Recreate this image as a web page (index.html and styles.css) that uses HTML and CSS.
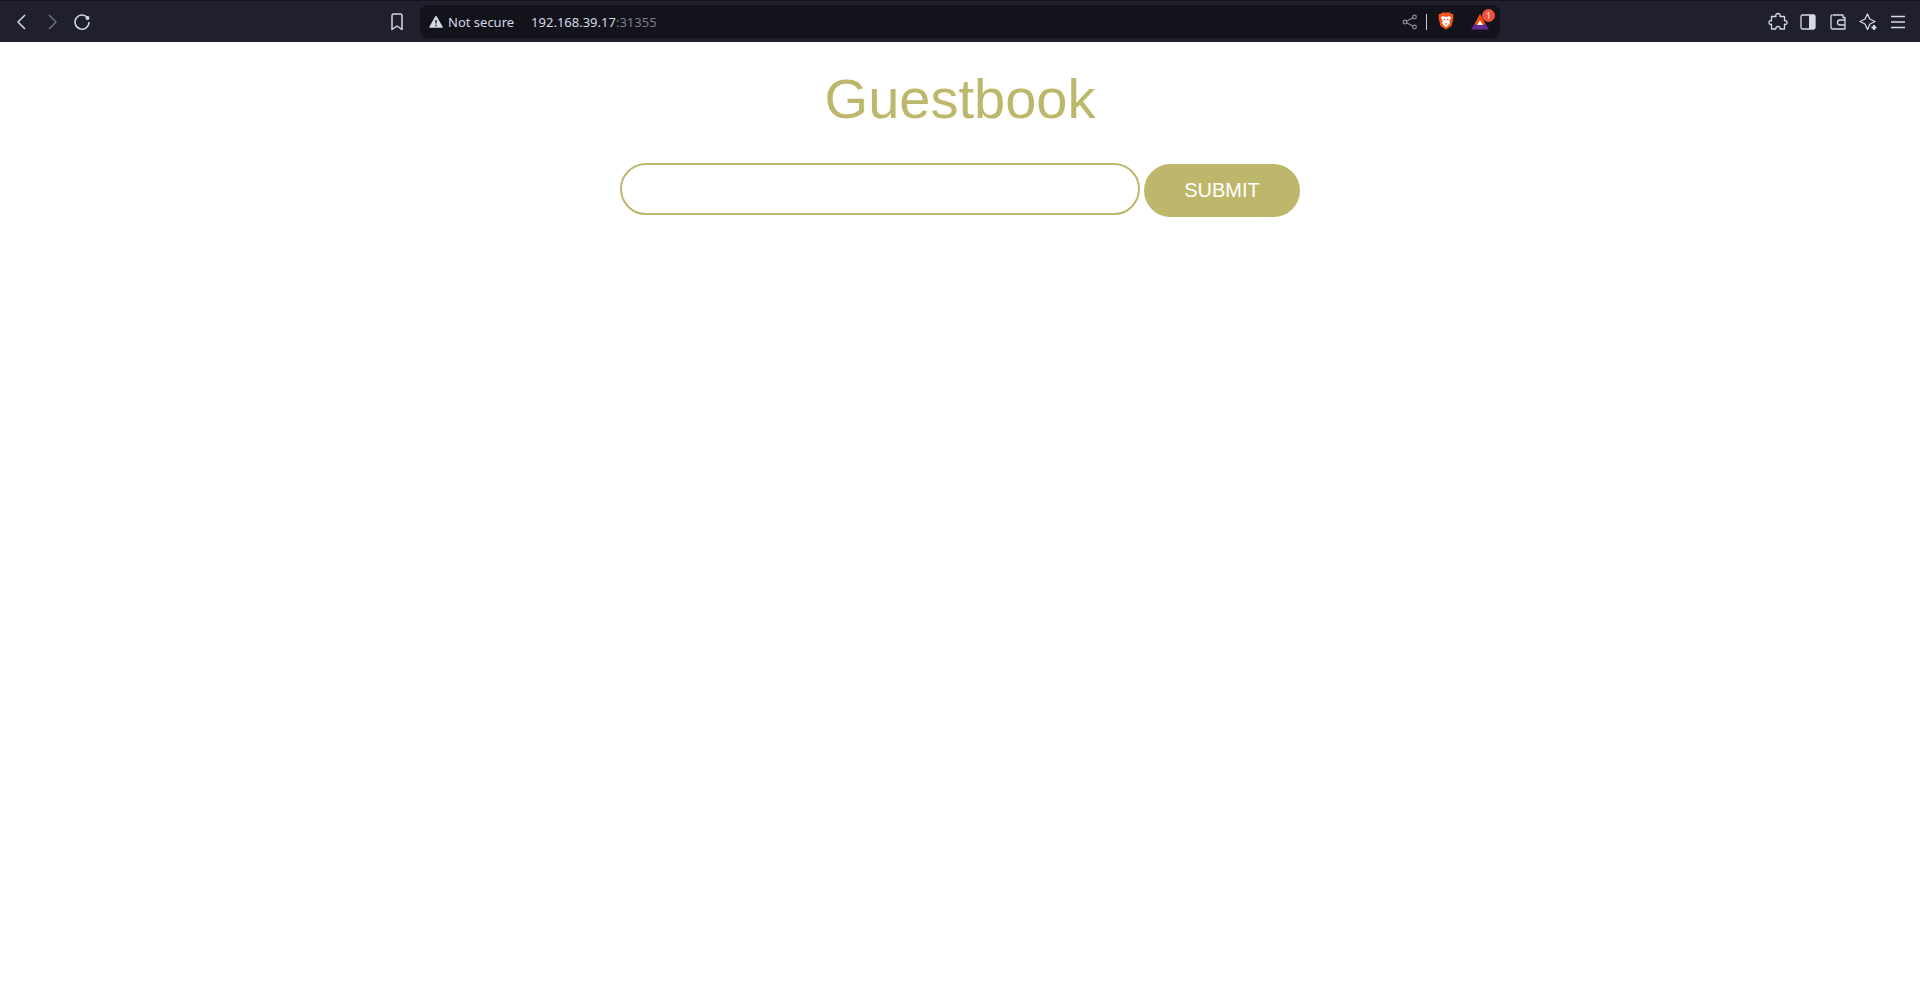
FILE: index.html
```html
<!DOCTYPE html>
<html lang="en">
    <head>
        <meta charset="UTF-8">
        <title>Guestbook</title>
        <link rel="stylesheet" href="styles.css">
    </head>

    <body>
        <header class="toolbar">
            <div class="nav-group">
                <svg class="icon" width="24" height="24" viewBox="0 0 24 24"><path d="M15 5l-7 7 7 7" class="line-bright"/></svg>
                <svg class="icon" width="24" height="24" viewBox="0 0 24 24"><path d="M9 5l7 7-7 7" class="line-dim"/></svg>
                <svg class="icon" width="24" height="24" viewBox="0 0 24 24"><path d="M18 8.500A7 7 0 1 0 19 12" class="line-bright"/><circle cx="17.500" cy="8" r="2" fill="#d5d8e6"/></svg>
            </div>
            <svg class="icon bookmark" width="24" height="24" viewBox="0 0 24 24"><path d="M7 5.500a1.500 1.500 0 0 1 1.500-1.500h7a1.500 1.500 0 0 1 1.500 1.500V19.500l-5-3.500-5 3.500z" class="line-bright"/></svg>
            <div class="address-bar">
                <svg class="warn" width="16" height="16" viewBox="0 0 16 16"><path d="M8 2.500l6 10.500h-12z" fill="#d5d8e6" stroke="#d5d8e6" stroke-width="1.500" stroke-linejoin="round"/><path d="M8 6v3.500M8 10.800v1.400" stroke="#15151f" stroke-width="1.400"/></svg>
                <span class="secure-text">Not secure</span>
                <span class="url">192.168.39.17<span class="port">:31355</span></span>
                <div class="bar-right">
                    <svg width="16" height="16" viewBox="0 0 16 16"><path d="M11 3.800l-6.500 3.400 0 1.600 6.500 3.400" class="line-grey"/><circle cx="12.500" cy="3" r="1.800" class="line-grey"/><circle cx="3" cy="8" r="1.800" class="line-grey"/><circle cx="12.500" cy="13" r="1.800" class="line-grey"/></svg>
                    <span class="divider"></span>
                    <svg class="lion" width="16" height="19" viewBox="0 0 16 19"><path d="M4 0.500h8l1.500 1.500 2 0-0.500 2 0.500 2-2 8-5.500 3.500-5.500-3.500-2-8 0.500-2-0.500-2 2 0z" fill="#f1561f"/><path d="M2.800 5.500l2.200-1.500 1.500 .8h3l1.500-.8 2.200 1.500-2 3.500 .8 2-3 3.500-.5 .5h-1l-.5-.5-3-3.500 .8-2z" fill="#fff"/><path d="M5.500 7.500h1.500M9 7.500h1.500M7 12h2" stroke="#f1561f" stroke-width="1.200"/></svg>
                    <div class="rewards">
                        <svg width="18" height="16" viewBox="0 0 18 16"><path d="M9 0l9 15.500h-18z" fill="#662d91"/><path d="M9 0l5.500 10.500h-11z" fill="#ff5000"/><path d="M9 6l2.800 5h-5.600z" fill="#fff"/></svg>
                        <span class="badge">1</span>
                    </div>
                </div>
            </div>
            <div class="tool-group">
                <svg class="icon" width="24" height="24" viewBox="0 0 24 24"><path d="M10 6.500c-.8-2 .8-3 2-3s2.800 1 2 3h4.500v4.300c2-.8 2.500 .7 2.500 1.700s-.5 2.500-2.500 1.700v4.800h-4.500c.6-1.800-1-2.500-2-2.500s-2.600 .7-2 2.500H5.500v-4.800c-2 .8-2.500-.7-2.500-1.700s.5-2.500 2.500-1.700V6.500z" class="line-thin"/></svg>
                <svg class="icon" width="24" height="24" viewBox="0 0 24 24"><rect x="5" y="5" width="14" height="14" rx="1.500" class="line-thin"/><rect x="13" y="5" width="6" height="14" fill="#d5d8e6"/></svg>
                <svg class="icon" width="24" height="24" viewBox="0 0 24 24"><path d="M7 5h10v2.500H19V19H6.500A1.500 1.500 0 0 1 5 17.500V6.500A1.500 1.500 0 0 1 6.500 5" class="line-thin"/><path d="M19 10h-5a2.500 2.500 0 0 0 0 5h5" class="line-thin"/></svg>
                <svg class="icon" width="24" height="24" viewBox="0 0 24 24"><path d="M11.500 4l2.300 5 5.200 2.500-5 2.500-2.500 5.500-2.500-5.500-5-2.500 5-2.500z" class="line-thin"/><path d="M18 15v5M15.500 17.500h5" stroke="#d5d8e6" stroke-width="2"/></svg>
                <svg class="icon" width="24" height="24" viewBox="0 0 24 24"><path d="M5 6.500h14M5 12h14M5 17.500h14" class="line-thin"/></svg>
            </div>
        </header>

        <main class="page">
            <h1 class="title">Guestbook</h1>
            <form class="entry-form" action="" method="GET">
                <input class="entry-input" type="text" name="entry">
                <button class="submit-btn" type="button">SUBMIT</button>
            </form>
        </main>
    </body>
</html>
```

FILE: styles.css
```css
html {
    background-color: #ffffff;
}

body {
    margin: 0;
    font-family: "Liberation Sans", Arial, sans-serif;
}

/* browser chrome */
.toolbar {
    display: flex;
    align-items: center;
    height: 41px;
    background-color: #1f1f2e;
    border-top: 1px solid #14141d;
    font-family: "Noto Sans", Inter, sans-serif;
}

.nav-group {
    display: flex;
    gap: 6px;
    margin-left: 10px;
}

.bookmark {
    margin-left: 291px;
}

.address-bar {
    display: flex;
    align-items: center;
    width: 1080px;
    height: 33px;
    margin-left: 11px;
    padding: 0 6px 0 8px;
    box-sizing: border-box;
    border-radius: 8px;
    background-color: #13131c;
    font-size: 13px;
    color: #d5d8e6;
}

.warn {
    margin-right: 4px;
}

.url {
    margin-left: 17px;
}

.port {
    color: #7b7d8a;
}

.bar-right {
    display: flex;
    align-items: center;
    margin-left: auto;
}

.divider {
    width: 1px;
    height: 16px;
    margin: 0 11px 0 8px;
    background-color: #c9ccd8;
}

.rewards {
    position: relative;
    display: flex;
    margin-left: 17px;
    margin-right: 5px;
}

.badge {
    position: absolute;
    top: -5px;
    right: -6px;
    width: 13px;
    height: 13px;
    border-radius: 50%;
    background-color: #f0503c;
    color: #ffffff;
    font-size: 8px;
    line-height: 13px;
    text-align: center;
}

.tool-group {
    display: flex;
    gap: 6px;
    margin-left: auto;
    margin-right: 10px;
}

.line-bright, .line-dim, .line-grey, .line-thin {
    fill: none;
    stroke-width: 1.5;
    stroke-linejoin: round;
}

.line-bright {
    stroke: #d5d8e6;
}

.line-dim {
    stroke: #6d6f7d;
}

.line-grey {
    stroke: #8d8f9c;
    stroke-width: 1.2;
}

.line-thin {
    stroke: #d5d8e6;
    stroke-width: 1.3;
}

/* page */
.page {
    display: flex;
    flex-direction: column;
    align-items: center;
}

.title {
    margin: 25px 0 0;
    color: #bdb76b;
    font-size: 56px;
    font-weight: 400;
    line-height: 64px;
}

.entry-form {
    display: flex;
    align-items: flex-start;
    gap: 4px;
    margin-top: 32px;
}

.entry-input {
    box-sizing: border-box;
    width: 520px;
    height: 52px;
    border: 2px solid #bdb76b;
    border-radius: 26px;
    background-color: #ffffff;
}

.submit-btn {
    width: 156px;
    height: 53px;
    margin-top: 1px;
    border: none;
    border-radius: 27px;
    background-color: #bdb76b;
    color: #ffffff;
    font-family: "Liberation Sans", Arial, sans-serif;
    font-size: 20px;
}
```
